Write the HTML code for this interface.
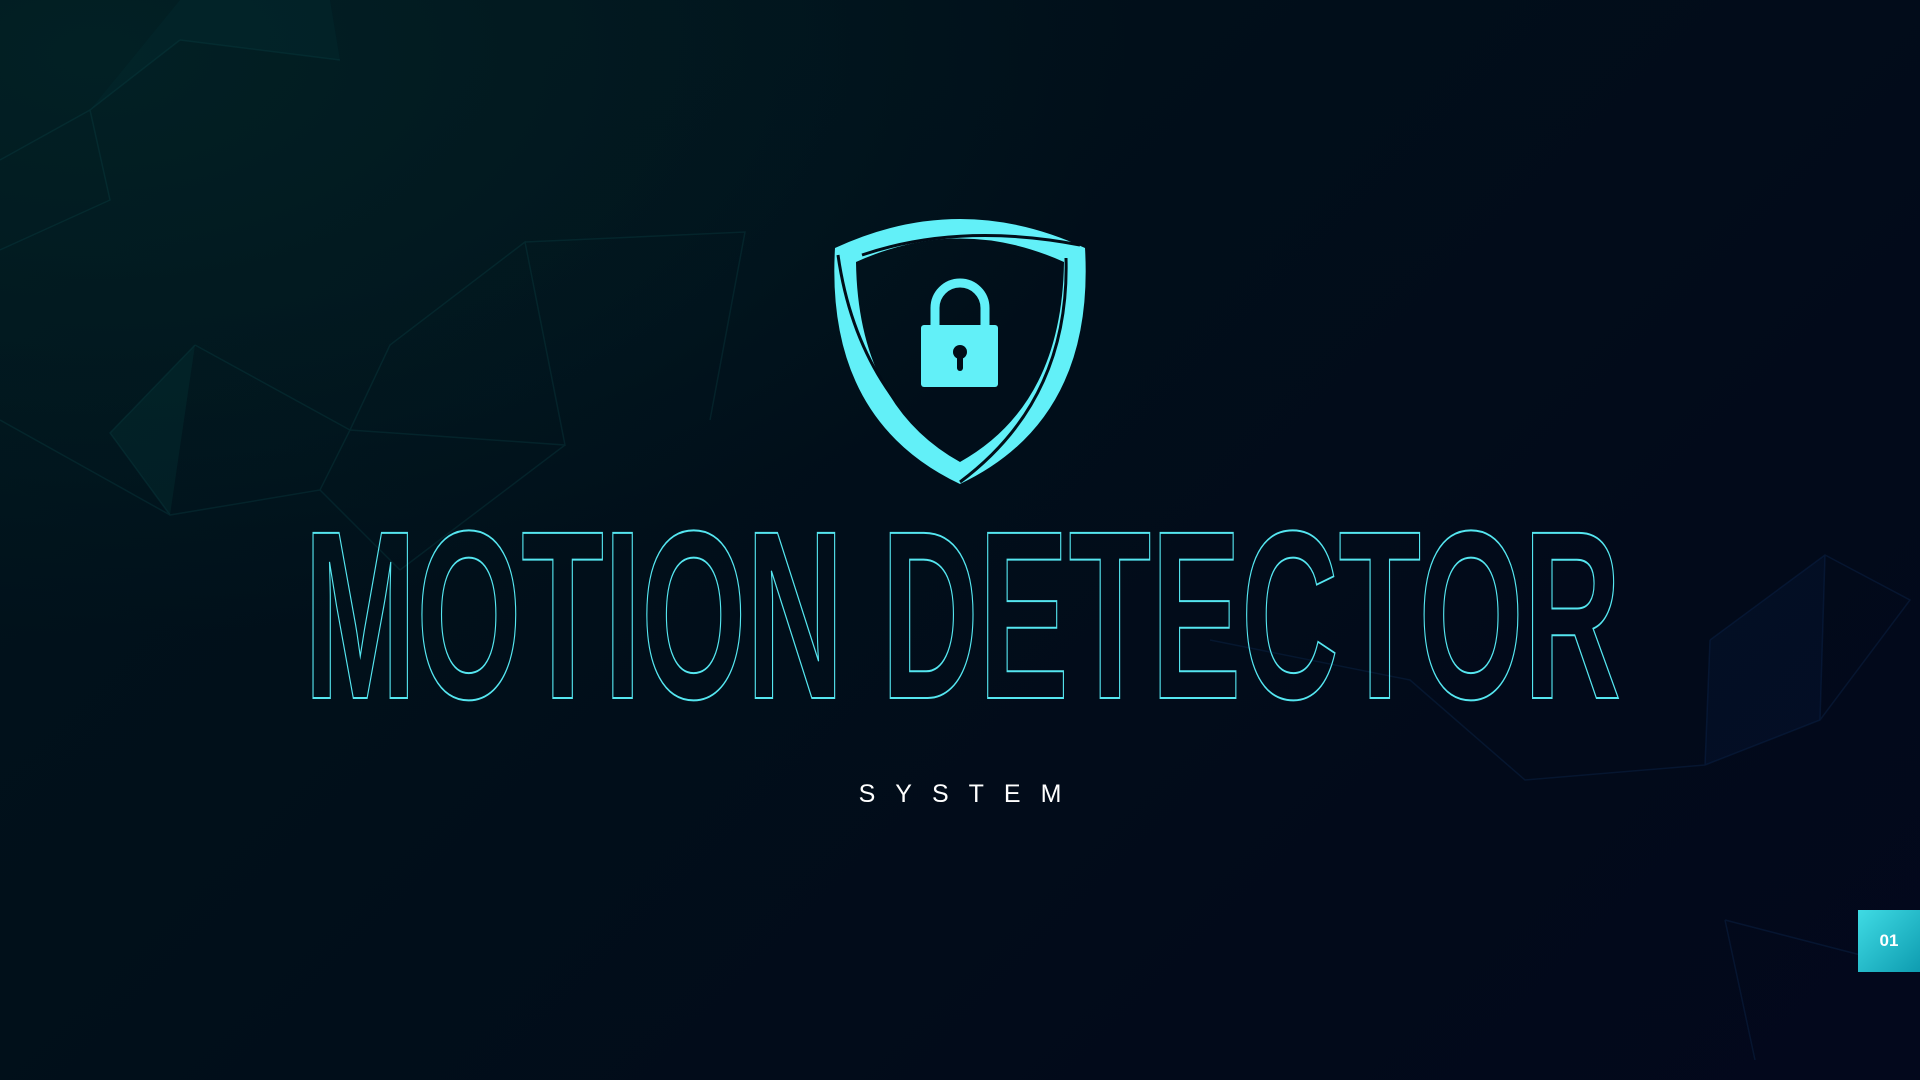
<!DOCTYPE html>
<html><head><meta charset="utf-8"><style>
html,body{margin:0;padding:0;width:1920px;height:1080px;overflow:hidden;background:#010d18}
.bg{position:absolute;inset:0;background:radial-gradient(ellipse at 5% 5%,#022024 0%,rgba(2,20,30,0) 40%),linear-gradient(135deg,#01141c 0%,#010f1a 40%,#020a1a 75%,#03081c 100%)}
svg{position:absolute;left:0;top:0}
.sys{position:absolute;left:0;width:1920px;top:780px;text-align:center;color:#fff;font:25px "Liberation Sans",sans-serif;letter-spacing:20px;text-indent:20px}
.badge{position:absolute;left:1858px;top:910px;width:62px;height:62px;background:linear-gradient(135deg,#3fdbe4,#0e9cb0);color:#fff;font:bold 17px "Liberation Sans",sans-serif;display:flex;align-items:center;justify-content:center}
</style></head><body>
<div class="bg"></div>
<svg width="1920" height="1080" viewBox="0 0 1920 1080">
<g stroke="#0d4a4c" stroke-width="1.5" fill="none" opacity="0.3">
<path d="M180 40 L90 110 L0 160 M180 40 L340 60 M90 110 L110 200 L0 250 M195 345 L110 433 L170 515 L320 490 L350 430 L195 345 L350 430 L565 445 L525 242 L390 345 L350 430 M525 242 L745 232 L710 420 M320 490 L400 570 M170 515 L0 420 M565 445 L400 570"/>
</g>
<polygon points="195,345 110,433 170,515" fill="#06403e" opacity="0.25"/>
<polygon points="180,0 90,110 180,40 340,60 330,0" fill="#05383a" opacity="0.2"/>
<g stroke="#0e2d5a" stroke-width="1.5" fill="none" opacity="0.35">
<path d="M1710 640 L1825 555 L1910 600 L1820 720 L1705 765 L1525 780 L1410 680 L1210 640 M1710 640 L1705 765 M1825 555 L1820 720 M1725 920 L1755 1060 M1725 920 L1880 960"/>
</g>
<polygon points="1710,640 1825,555 1820,720 1705,765" fill="#0a2350" opacity="0.2"/>
<path d="M835 248 Q960 190 1085 248 Q1095 420 960 484 Q825 420 835 248 Z M856 262 Q858 405 960 462 Q1062 405 1064 262 Q960 215 856 262 Z" fill="#62f0f8" fill-rule="evenodd"/>
<path d="M838 255 Q850 340 895 400" stroke="#010d18" stroke-width="3" fill="none"/>
<path d="M1066 258 Q1070 400 960 482" stroke="#010d18" stroke-width="3" fill="none"/>
<path d="M862 255 Q960 222 1080 245" stroke="#010d18" stroke-width="3" fill="none"/>
<path d="M935 325 V308 A25 25 0 0 1 985 308 V325" stroke="#62f0f8" stroke-width="9" fill="none"/>
<rect x="921" y="325" width="77" height="62" rx="3" fill="#62f0f8"/>
<circle cx="960" cy="352" r="7" fill="#010d18"/>
<rect x="957" y="354" width="6" height="17" rx="3" fill="#010d18"/>
<text x="304" y="698" textLength="1317" lengthAdjust="spacingAndGlyphs" font-family="Liberation Sans Narrow, Liberation Sans, sans-serif" font-weight="bold" font-size="240" fill="none" stroke="#55e6f0" stroke-width="2">MOTION DETECTOR</text>
</svg>
<div class="sys">SYSTEM</div>
<div class="badge">01</div>
</body></html>
